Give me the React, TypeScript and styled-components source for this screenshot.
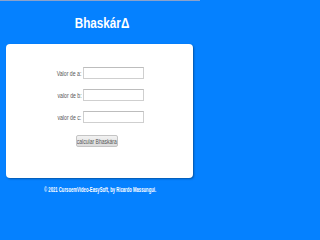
import React from "react";
import styled, { createGlobalStyle } from "styled-components";

const GlobalStyle = createGlobalStyle`
  html, body {
    margin: 0;
    padding: 0;
    background: #0581ff;
  }
  body {
    font-family: "Liberation Sans", Arial, sans-serif;
  }
`;

const Page = styled.div`
  width: 200px;
  height: 200px;
  box-sizing: border-box;
  border-top: 1px solid #8aa2cc;
  background: #0581ff;
  display: flex;
  flex-direction: column;
  overflow: hidden;
`;

const Header = styled.header`
  height: 43px;
  display: flex;
  align-items: center;
  justify-content: center;
`;

const Squeeze = styled.span<{ $x: number; $origin?: string }>`
  display: inline-block;
  white-space: nowrap;
  transform: scaleX(${(p) => p.$x});
  transform-origin: ${(p) => p.$origin || "center"};
`;

const Title = styled.h1`
  margin: 0 0 0 3px;
  font-family: "Liberation Sans", Arial, sans-serif;
  font-weight: bold;
  font-size: 15px;
  color: #ffffff;
  line-height: 1;
`;

const Card = styled.main`
  margin: 0 7px 0 6px;
  height: 134px;
  box-sizing: border-box;
  background: #ffffff;
  border-radius: 4px;
  box-shadow: 1px 1px 2px rgba(0, 0, 0, 0.35);
  padding-top: 23px;
  display: flex;
  flex-direction: column;
  align-items: center;
`;

const Form = styled.form`
  display: flex;
  flex-direction: column;
  align-items: center;
  gap: 10px;
`;

const Row = styled.div`
  display: flex;
  align-items: center;
  gap: 1px;
`;

const Label = styled.label`
  width: 26px;
  text-align: right;
  font-size: 7px;
  color: #555555;
  display: flex;
  justify-content: flex-end;
`;

const Input = styled.input`
  width: 61px;
  height: 12px;
  box-sizing: border-box;
  margin: 0;
  padding: 0 2px;
  border: 1px solid #cfcfcf;
  border-top-color: #bdbdbd;
  background: #ffffff;
  font-size: 7px;
  outline: none;
`;

const Button = styled.button`
  margin-top: 2px;
  margin-right: 6px;
  width: 42px;
  height: 12px;
  padding: 0;
  box-sizing: border-box;
  border: 1px solid #c4c4c4;
  border-radius: 2px;
  background: linear-gradient(#f2f2f2, #dcdcdc);
  font-family: "Liberation Sans", Arial, sans-serif;
  font-size: 7px;
  color: #555555;
  display: flex;
  align-items: center;
  justify-content: center;
  overflow: hidden;
`;

const Footer = styled.footer`
  flex: 1;
  display: flex;
  align-items: center;
  justify-content: center;
  font-size: 7.5px;
  font-weight: bold;
  color: #ffffff;
`;

const fields = [
  { id: "a", label: "Valor de a:" },
  { id: "b", label: "valor de b:" },
  { id: "c", label: "valor de c:" },
];

const App: React.FC = () => {
  return (
    <>
      <GlobalStyle />
      <Page>
        <Header>
          <Title>
            <Squeeze $x={0.78}>BhaskárΔ</Squeeze>
          </Title>
        </Header>
        <Card>
          <Form onSubmit={(e) => e.preventDefault()}>
            {fields.map((f) => (
              <Row key={f.id}>
                <Label htmlFor={f.id}>
                  <Squeeze $x={0.74} $origin="right">
                    {f.label}
                  </Squeeze>
                </Label>
                <Input id={f.id} type="text" />
              </Row>
            ))}
            <Button type="button">
              <Squeeze $x={0.72}>calcular Bhaskára</Squeeze>
            </Button>
          </Form>
        </Card>
        <Footer>
          <Squeeze $x={0.56}>
            © 2021 CursoemVídeo-EasySoft, by Ricardo Massungui.
          </Squeeze>
        </Footer>
      </Page>
    </>
  );
};

export default App;
